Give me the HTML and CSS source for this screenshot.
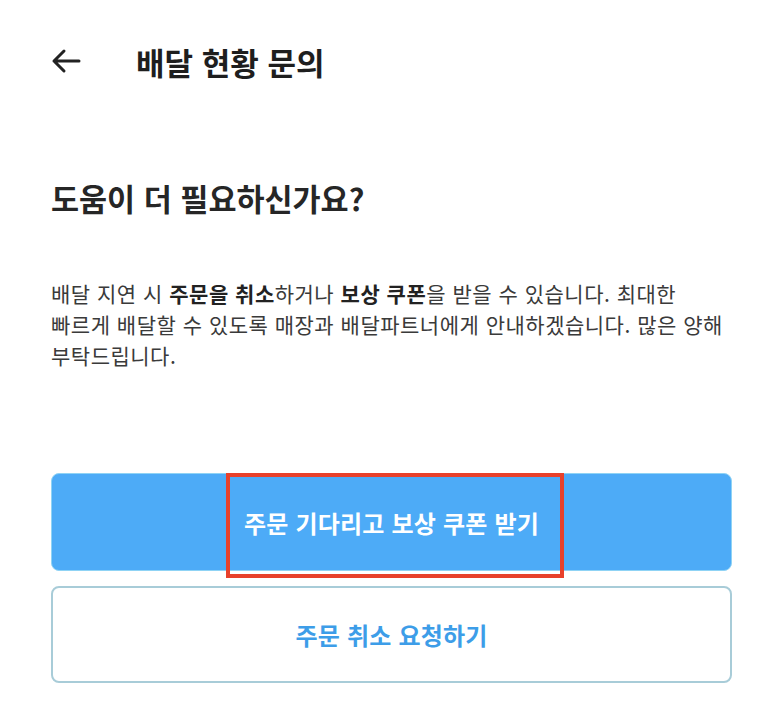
FILE: index.html
```html
<!DOCTYPE html>
<html lang="ko">
  <head>
    <meta charset="UTF-8" />
    <meta name="viewport" content="width=device-width, initial-scale=1.0" />
    <title>배달 현황 문의</title>
    <link rel="stylesheet" href="styles.css">
  </head>
  <body>
    <header class="topbar">
      <button class="back" aria-label="뒤로">
        <svg width="30" height="26" viewBox="0 0 30 26">
          <path d="M28 13H3M13 3L3 13l10 10" fill="none" stroke="#222" stroke-width="3" stroke-linecap="round" stroke-linejoin="round" />
        </svg>
      </button>
      <h1>배달 현황 문의</h1>
    </header>
    <main class="content">
      <h2>도움이 더 필요하신가요?</h2>
      <p class="desc">
        배달 지연 시 <b>주문을 취소</b>하거나 <b>보상 쿠폰</b>을 받을 수 있습니다. 최대한<br />
        빠르게 배달할 수 있도록 매장과 배달파트너에게 안내하겠습니다. 많은 양해<br />
        부탁드립니다.
      </p>
      <div class="actions">
        <button class="btn btn-primary">주문 기다리고 보상 쿠폰 받기</button>
        <button class="btn btn-outline">주문 취소 요청하기</button>
        <div class="highlight"></div>
      </div>
    </main>
  </body>
</html>
```

FILE: styles.css
```css
body {
  margin: 0;
  padding: 0;
  background-color: #fff;
  color: #222;
  font-family: "Noto Sans CJK KR", "Noto Sans", sans-serif;
}
.topbar {
  display: flex;
  align-items: center;
  height: 122px;
  padding: 0 51px;
}
.back {
  display: flex;
  padding: 0;
  border: none;
  background: none;
  margin-right: 55px;
}
.topbar h1 {
  margin: 0;
  font-size: 31px;
  font-weight: 700;
  color: #1e1e1e;
}
.content {
  padding: 0 44px 0 51px;
}
.content h2 {
  margin: 58px 0 0;
  font-size: 30.5px;
  line-height: 36px;
  font-weight: 700;
  color: #262626;
}
.desc {
  margin: 62px 0 0;
  font-size: 21px;
  line-height: 31px;
  color: #3a3a3a;
  letter-spacing: 0.5px;
  white-space: nowrap;
}
.desc b {
  font-weight: 700;
  color: #222;
}
.actions {
  position: relative;
  display: flex;
  flex-direction: column;
  gap: 15px;
  margin-top: 102px;
}
.btn {
  height: 98px;
  border-radius: 8px;
  font-family: inherit;
  font-size: 24px;
  font-weight: 700;
  letter-spacing: 0.2px;
  cursor: pointer;
}
.btn-primary {
  border: 1px solid #8fd3f5;
  background-color: #4dabf7;
  color: #fff;
}
.btn-outline {
  height: 97px;
  border: 2px solid #a8ccd8;
  background-color: #fff;
  color: #3d9de8;
}
.highlight {
  position: absolute;
  left: 175px;
  top: 0;
  width: 330px;
  height: 97px;
  border: 4px solid #e8412b;
}
```
